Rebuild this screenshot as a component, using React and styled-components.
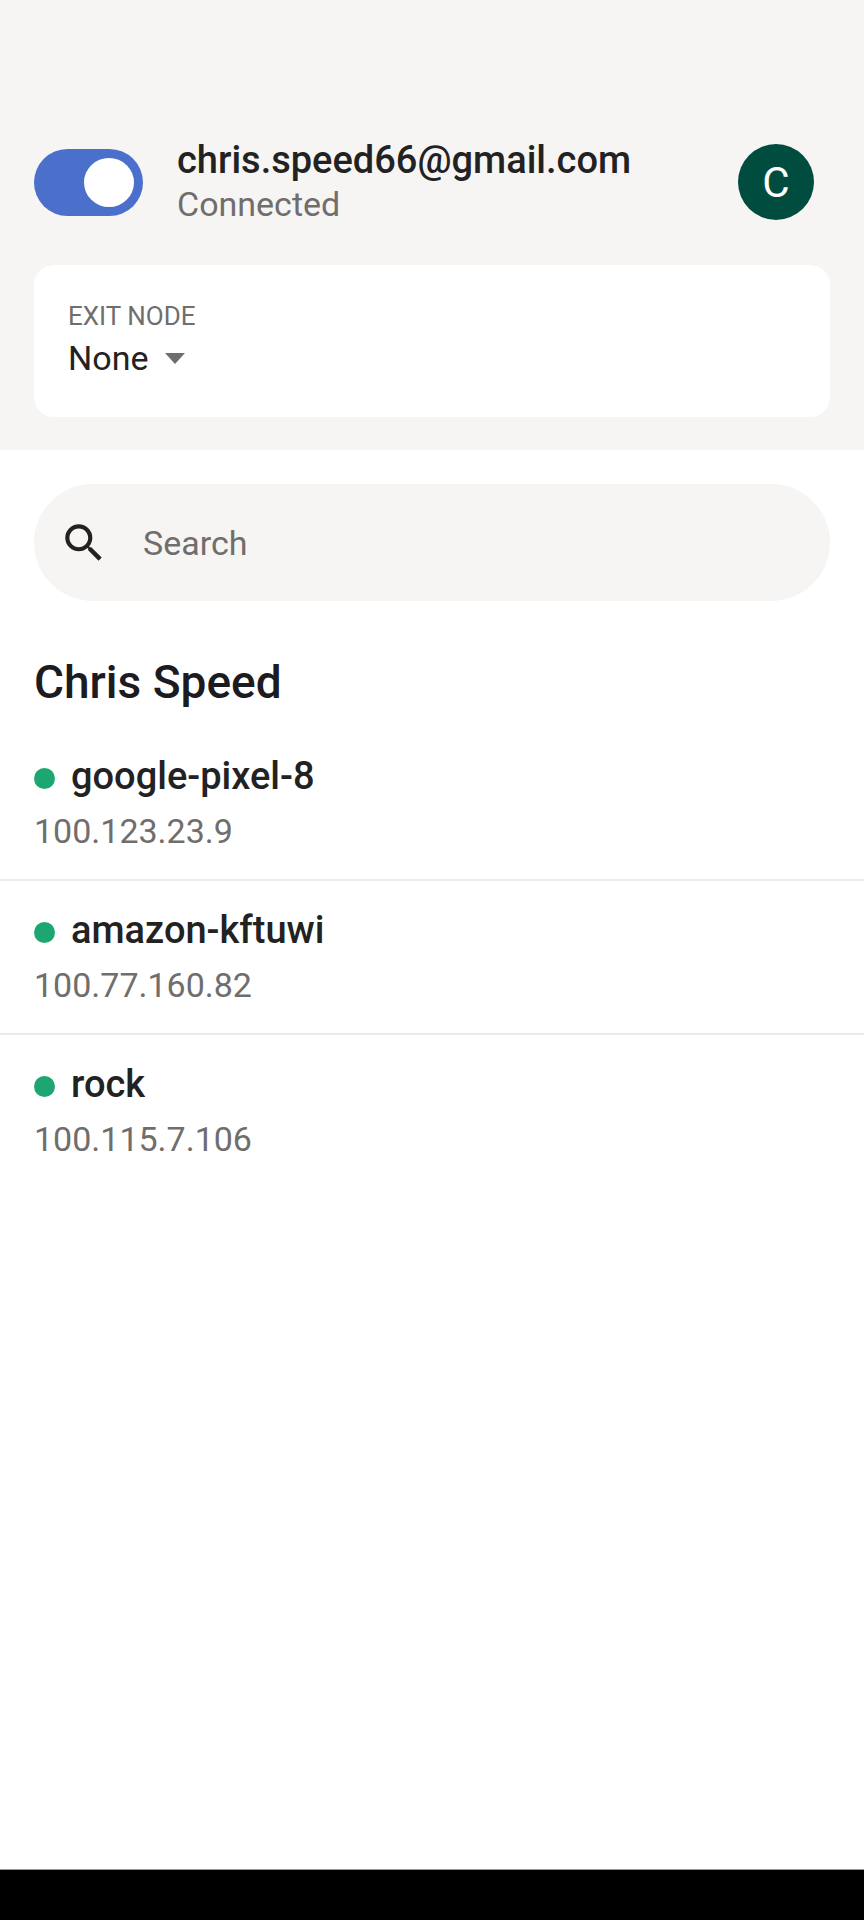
import React, { useState } from 'react'
import styled, { createGlobalStyle } from 'styled-components'
import { MdSearch } from 'react-icons/md'

const peers = [
  { name: 'google-pixel-8', ip: '100.123.23.9' },
  { name: 'amazon-kftuwi', ip: '100.77.160.82' },
  { name: 'rock', ip: '100.115.7.106' },
]

function App() {
  const [connected, setConnected] = useState(true)
  const [query, setQuery] = useState('')

  const shown = peers.filter((peer) => peer.name.includes(query.toLowerCase()))

  return (
    <Container>
      <GlobalStyle />
      <Header>
        <AccountRow>
          <Toggle
            type="checkbox"
            role="switch"
            aria-label="Connection"
            checked={connected}
            onChange={(e) => setConnected(e.target.checked)}
          />
          <Account>
            <Title>chris.speed66@gmail.com</Title>
            <Text $muted>{connected ? 'Connected' : 'Not connected'}</Text>
          </Account>
          <Avatar type="button" aria-label="Account">C</Avatar>
        </AccountRow>
        <ExitNode>
          <Label htmlFor="exit-node">EXIT NODE</Label>
          <SelectRow>
            <Select id="exit-node" defaultValue="none">
              <option value="none">None</option>
            </Select>
            <Arrow viewBox="0 0 20 11" aria-hidden="true">
              <path d="M0 0h20L10 11z" />
            </Arrow>
          </SelectRow>
        </ExitNode>
      </Header>
      <Main>
        <SearchBar>
          <MdSearch size={50} aria-hidden="true" />
          <SearchInput
            type="text"
            aria-label="Search"
            placeholder="Search"
            value={query}
            onChange={(e) => setQuery(e.target.value)}
          />
        </SearchBar>
        <Heading>Chris Speed</Heading>
        <PeerList>
          {shown.map((peer) => (
            <Peer key={peer.name}>
              <PeerName>
                <Dot />
                <Title>{peer.name}</Title>
              </PeerName>
              <Text $muted>{peer.ip}</Text>
            </Peer>
          ))}
        </PeerList>
      </Main>
      <NavBar />
    </Container>
  )
}

export default App

const GlobalStyle = createGlobalStyle`
  * {
    box-sizing: border-box;
  }

  body {
    margin: 0;
    background-color: #fff;
    color: #232222;
    font-family: Roboto, 'Liberation Sans', sans-serif;
  }
`

const Container = styled.div`
  display: flex;
  flex-direction: column;
  min-height: 100vh;
`

const Header = styled.header`
  display: flex;
  flex-direction: column;
  gap: 39px;
  padding: 138px 34px 33px;
  background-color: #f6f5f3;
`

const AccountRow = styled.div`
  display: flex;
  align-items: center;
  gap: 34px;
  padding-right: 16px;
`

const Toggle = styled.input`
  appearance: none;
  display: flex;
  flex-shrink: 0;
  justify-content: ${(props) => (props.checked ? 'flex-end' : 'flex-start')};
  width: 109px;
  height: 67px;
  margin: 0;
  padding: 9px;
  border-radius: 34px;
  background-color: ${(props) => (props.checked ? '#4b70cc' : '#c4c2c0')};
  cursor: pointer;

  &::before {
    content: '';
    width: 50px;
    border-radius: 50%;
    background-color: #fff;
  }
`

const Account = styled.div`
  flex: 1;
  min-width: 0;
`

const Title = styled.div`
  font-size: 38px;
  font-weight: 500;
  line-height: 44px;
`

const Text = styled.div`
  color: ${(props) => (props.$muted ? '#706e6d' : 'inherit')};
  font-size: 34px;
  line-height: 44px;
`

const Avatar = styled.button`
  width: 76px;
  height: 76px;
  padding: 0;
  border: none;
  border-radius: 50%;
  background-color: #004d40;
  color: #fff;
  font-family: inherit;
  font-size: 42px;
  cursor: pointer;
`

const ExitNode = styled.div`
  display: flex;
  flex-direction: column;
  gap: 3px;
  padding: 34px 34px 37px;
  border-radius: 20px;
  background-color: #fff;
`

const Label = styled.label`
  color: #706e6d;
  font-size: 26px;
  line-height: 34px;
`

const SelectRow = styled.div`
  display: flex;
  align-items: center;
  gap: 16px;
`

const Select = styled.select`
  appearance: none;
  padding: 0;
  border: none;
  background: none;
  color: inherit;
  font-family: inherit;
  font-size: 34px;
  line-height: 44px;
`

const Arrow = styled.svg`
  width: 20px;
  height: 11px;
  fill: #706e6d;
`

const Main = styled.main`
  flex: 1;
  padding-top: 34px;
`

const SearchBar = styled.div`
  display: flex;
  align-items: center;
  gap: 34px;
  height: 117px;
  margin: 0 34px;
  padding: 0 25px;
  border-radius: 59px;
  background-color: #f6f5f3;
`

const SearchInput = styled.input`
  flex: 1;
  min-width: 0;
  padding: 0;
  border: none;
  outline: none;
  background: none;
  color: inherit;
  font-family: inherit;
  font-size: 34px;
  line-height: 44px;

  &::placeholder {
    color: #706e6d;
    opacity: 1;
  }
`

const Heading = styled.h1`
  margin: 53px 34px 17px;
  color: #1c1b1f;
  font-size: 46px;
  font-weight: 500;
  line-height: 56px;
`

const PeerList = styled.ul`
  margin: 0;
  padding: 0;
  list-style: none;
`

const Peer = styled.li`
  display: flex;
  flex-direction: column;
  gap: 11px;
  padding: 27px 34px 26px;

  &:not(:last-child) {
    border-bottom: 2px solid #edebea;
  }
`

const PeerName = styled.div`
  display: flex;
  align-items: center;
  gap: 16px;
`

const Dot = styled.span`
  width: 21px;
  height: 21px;
  margin-top: 4px;
  border-radius: 50%;
  background-color: #1ea672;
`

const NavBar = styled.footer`
  height: 51px;
  border-top: 1px solid #9a9a9a;
  background-color: #000;
`
